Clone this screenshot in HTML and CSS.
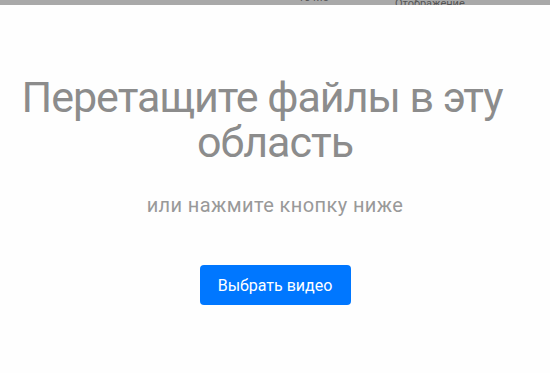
FILE: index.html
```html
<!DOCTYPE html>
<html lang="ru">
<head>
<meta charset="utf-8">
<link rel="stylesheet" href="styles.css">
</head>
<body>
<div class="topbar">
  <span class="tb-size">10 Мб</span>
  <span class="tb-view">Отображение</span>
</div>
<main class="drop">
  <h1 class="title"><span class="line line-first">Перетащите файлы в эту </span><span class="line">область</span></h1>
  <p class="hint">или нажмите кнопку ниже</p>
  <button class="pick">Выбрать видео</button>
</main>
</body>
</html>
```
FILE: styles.css
```css
html, body {
  margin: 0;
  padding: 0;
  background: #fefefe;
  font-family: "Roboto", "Open Sans", sans-serif;
}
.topbar {
  height: 5px;
  background: #a9a9a9;
  overflow: hidden;
  position: relative;
  font-size: 11px;
  color: #555;
}
.tb-size {
  position: absolute;
  left: 298px;
  top: -9px;
}
.tb-view {
  position: absolute;
  left: 395px;
  top: -3px;
}
.drop {
  display: flex;
  flex-direction: column;
  align-items: center;
  text-align: center;
  padding-top: 70px;
}
.title {
  margin: 0;
  width: 530px;
  font-size: 43px;
  line-height: 45px;
  letter-spacing: -1px;
  font-weight: 400;
  color: #8c8c8c;
}
.line {
  display: block;
}
.line-first {
  padding-right: 26px;
}
.hint {
  margin: 28px 0 0;
  font-size: 20px;
  line-height: 24px;
  letter-spacing: 0.4px;
  color: #999;
}
.pick {
  margin-top: 48px;
  width: 151px;
  height: 40px;
  border: 0;
  border-radius: 4px;
  background: #0077ff;
  color: #fff;
  font-family: "Roboto", "Open Sans", sans-serif;
  font-size: 16px;
  cursor: pointer;
}
```
